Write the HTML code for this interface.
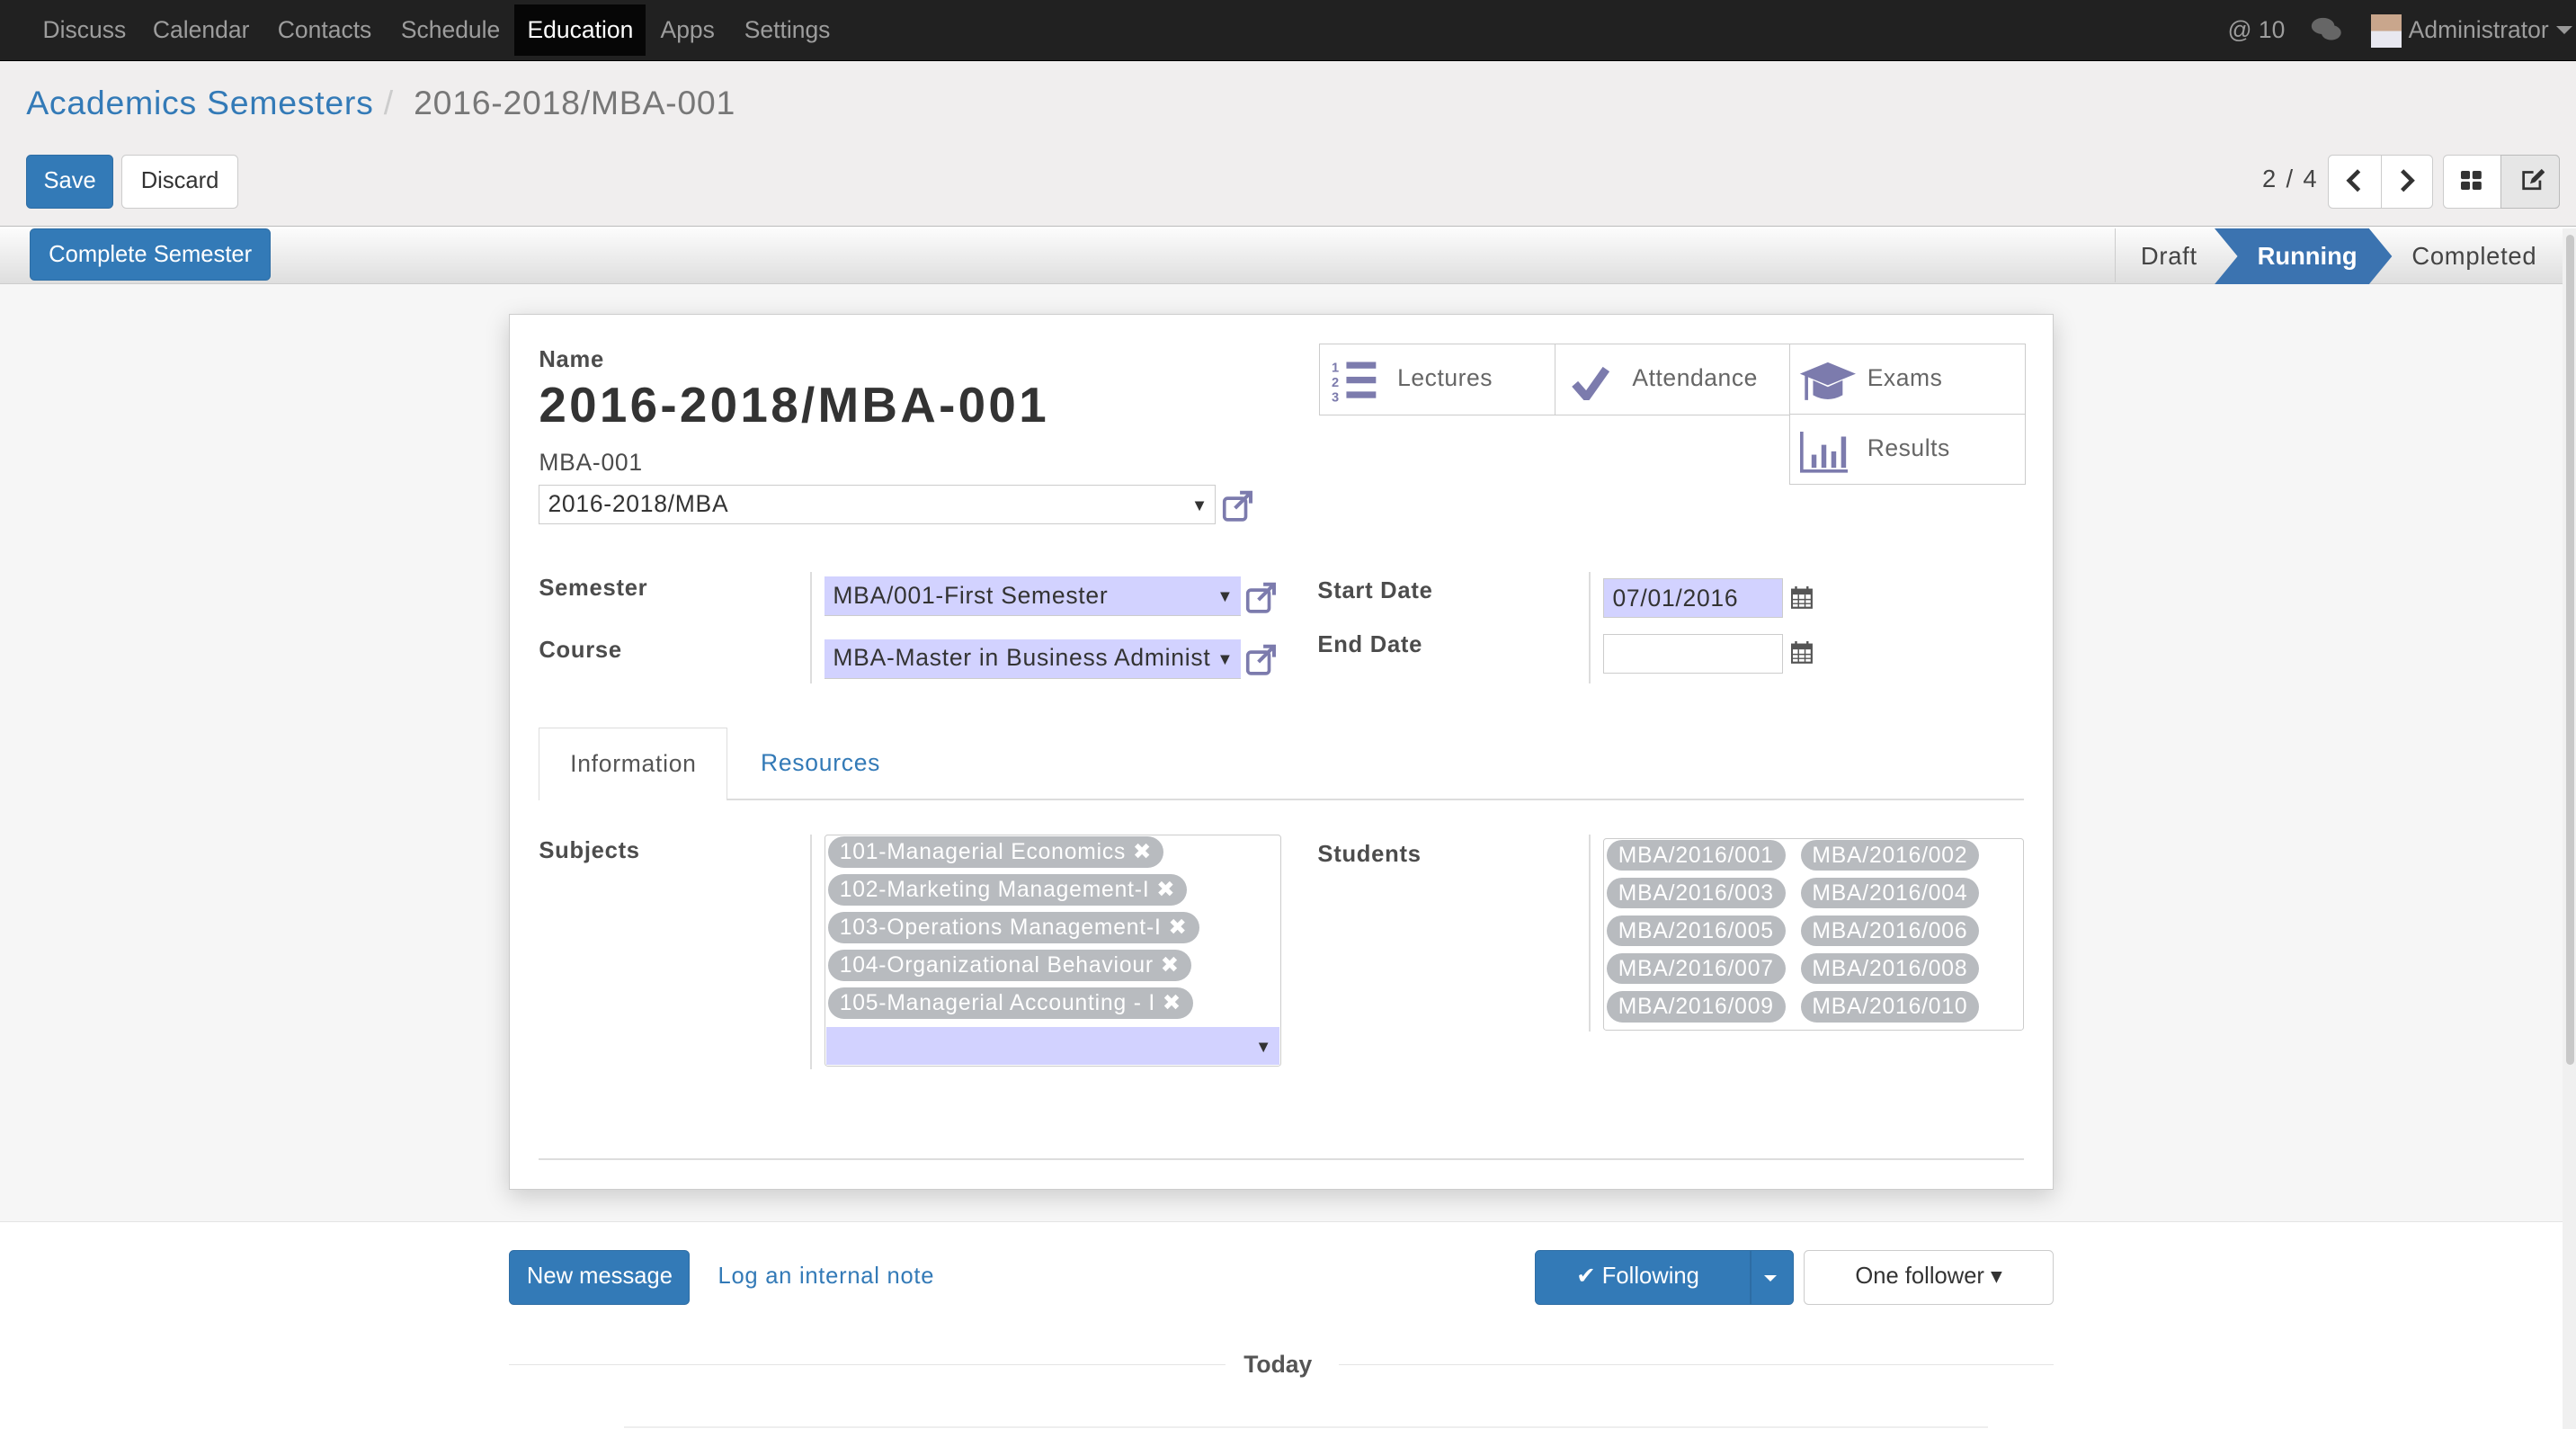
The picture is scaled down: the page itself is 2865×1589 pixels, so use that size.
<!DOCTYPE html>
<html><head><meta charset="utf-8">
<style>
*{box-sizing:border-box;margin:0;padding:0}
html,body{width:2865px;height:1589px;overflow:hidden;background:#fff}
#r{zoom:1.8272;position:relative;width:1568px;height:870px;font-family:"Liberation Sans",sans-serif;font-size:14px;color:#4c4c4c;overflow:hidden}
.a{position:absolute;white-space:nowrap}
.w{letter-spacing:.4px}
.nav{left:0;top:0;width:1568px;height:37px;background:#212121;border-bottom:1px solid #000}
.nav span{position:absolute;top:10px;color:#9d9d9d;font-size:14.5px}
.cp{left:0;top:37px;width:1568px;height:101px;background:#f0eeee;border-bottom:1px solid #bbb}
.btn{position:absolute;border-radius:3px;font-size:14px;text-align:center}
.bp{background:#337ab7;color:#fff;border:1px solid #2e6da4}
.bd{background:#fff;color:#333;border:1px solid #ccc}
.sb{left:0;top:139px;width:1560px;height:34px;background:linear-gradient(#fcfcfc,#dedede);border-bottom:1px solid #ccc}
.bg{left:0;top:173px;width:1560px;height:570px;background:#f6f6f6}
.sheet{left:310px;top:191px;width:940px;height:533px;background:#fff;border:1px solid #ccc;box-shadow:0 4px 14px rgba(0,0,0,.18)}
.lbl{font-weight:bold;color:#4c4c4c;font-size:14px;letter-spacing:.4px}
.req{background:#d2d2ff}
.tag{position:absolute;height:19px;border-radius:10px;background:#b8bbbf;color:#fff;font-size:13.5px;padding:1px 7px;line-height:17px;letter-spacing:.45px}
.bb{position:absolute;border:1px solid #ccc;background:#fff;height:44px}
.bb span{position:absolute;left:47px;top:12px;font-size:14.5px;color:#666;letter-spacing:.3px}
.sep{position:absolute;width:1px;background:#ddd}
</style></head><body><div id="r">
<svg width="0" height="0" style="position:absolute"><defs>
<g id="ext"><rect x="1.5" y="5" width="13" height="13" rx="2" fill="none" stroke="#7c7bad" stroke-width="2"/><path d="M8 11 L17 2 M11 1.5 H17.5 V8" fill="none" stroke="#7c7bad" stroke-width="2.2"/></g>
<g id="cal"><rect x="0.5" y="2" width="12" height="11" fill="none" stroke="#555" stroke-width="1.2"/><rect x="0.5" y="2" width="12" height="3" fill="#555"/><path d="M3 0v3M10 0v3" stroke="#555" stroke-width="1.3"/><path d="M1 8h11M1 10.5h11M4.5 5v8M8.5 5v8" stroke="#555" stroke-width=".8"/></g>
</defs></svg>
<div class="a nav">
<span style="left:26px">Discuss</span><span style="left:93px">Calendar</span><span style="left:169px">Contacts</span><span style="left:244px">Schedule</span>
<div class="a" style="left:313px;top:3px;width:80px;height:31px;background:#060606"></div>
<span style="left:321px;color:#fff">Education</span><span style="left:402px">Apps</span><span style="left:453px">Settings</span>
<span style="left:1356px">@ 10</span>
<svg class="a" style="left:1406px;top:10px" width="20" height="16"><ellipse cx="8" cy="6" rx="7" ry="5" fill="#666"/><ellipse cx="13" cy="10" rx="6" ry="4.5" fill="#666"/></svg>
<div class="a" style="left:1443px;top:9px;width:19px;height:20px;background:linear-gradient(#c9a68c 0 50%,#e8e8f0 50%)"></div>
<span style="left:1466px">Administrator</span>
<span style="left:1556px;top:16px;border:5px solid transparent;border-top-color:#999;width:0;height:0"></span>
</div>
<div class="a cp">
<div class="a w" style="left:16px;top:14px;font-size:20.5px;color:#337ab7">Academics Semesters <span style="color:#ccc">/</span> <span style="color:#777">&nbsp;2016-2018/MBA-001</span></div>
<div class="btn bp" style="left:16px;top:57px;width:53px;height:33px;line-height:31px">Save</div>
<div class="btn bd" style="left:74px;top:57px;width:71px;height:33px;line-height:31px">Discard</div>
<div class="a" style="left:1377px;top:63px;font-size:15px;color:#444;letter-spacing:1px">2 / 4</div>
<div class="btn bd" style="left:1417px;top:57px;width:64px;height:33px"></div>
<div class="a" style="left:1449px;top:57px;width:1px;height:33px;background:#ccc"></div>
<svg class="a" style="left:1428px;top:66px" width="10" height="14"><path d="M8 1 L2 7 L8 13" stroke="#333" stroke-width="2.5" fill="none"/></svg>
<svg class="a" style="left:1460px;top:66px" width="10" height="14"><path d="M2 1 L8 7 L2 13" stroke="#333" stroke-width="2.5" fill="none"/></svg>
<div class="btn bd" style="left:1487px;top:57px;width:71px;height:33px"></div>
<div class="a" style="left:1522px;top:57px;width:36px;height:33px;background:#e6e6e6;border:1px solid #bbb;border-radius:0 3px 3px 0"></div>
<svg class="a" style="left:1498px;top:67px" width="13" height="12"><rect x="0" y="0" width="5.5" height="5" rx="1" fill="#333"/><rect x="7" y="0" width="5.5" height="5" rx="1" fill="#333"/><rect x="0" y="6.5" width="5.5" height="5" rx="1" fill="#333"/><rect x="7" y="6.5" width="5.5" height="5" rx="1" fill="#333"/></svg>
<svg class="a" style="left:1534px;top:65px" width="15" height="15"><path d="M8 3 H2 V13 H12 V8" fill="none" stroke="#333" stroke-width="1.5"/><path d="M6 10 L7 7 L13 1 L15 3 L9 9 Z" fill="#333"/></svg>
</div>
<div class="a sb">
<div class="btn bp w" style="left:18px;top:0;width:147px;height:32px;line-height:31px;letter-spacing:0">Complete Semester</div>
<div class="a" style="left:1287px;top:0;width:273px;height:33px;border-left:1px solid #ccc"></div>
<div class="a w" style="left:1303px;top:8px;font-size:15px;color:#444">Draft</div>
<svg class="a" style="left:1348px;top:0" width="110" height="34"><polygon points="0,0 94,0 108,17 94,34 0,34 14,17" fill="#3b73b0"/></svg>
<div class="a" style="left:1374px;top:8px;font-size:15px;color:#fff;font-weight:bold">Running</div>
<div class="a w" style="left:1468px;top:8px;font-size:15px;color:#444">Completed</div>
</div>
<div class="a" style="left:1560px;top:139px;width:8px;height:731px;background:#f0f0f0"></div>
<div class="a" style="left:1562px;top:143px;width:5px;height:505px;background:#c8c8c8;border-radius:3px"></div>
<div class="a bg"></div>
<div class="a sheet"></div>
<div class="a lbl" style="left:328px;top:211px">Name</div>
<div class="a" style="left:328px;top:229px;font-size:30px;font-weight:bold;color:#333;letter-spacing:1.8px">2016-2018/MBA-001</div>
<div class="a w" style="left:328px;top:273px;font-size:14.5px">MBA-001</div>
<div class="a w" style="left:328px;top:295px;width:412px;height:24px;border:1px solid #ccc;padding:3px 5px;font-size:14.5px;color:#333">2016-2018/MBA<span style="position:absolute;right:4px;font-size:10px;top:6px">&#9660;</span></div>
<svg class="a" style="left:744px;top:298px" width="20" height="20"><use href="#ext"/></svg>
<div class="bb" style="left:803px;top:209px;width:144px"><svg class="a" style="left:7px;top:8px" width="28" height="28"><text x="0" y="9" font-size="8" fill="#7c7bad" font-weight="bold">1</text><text x="0" y="18" font-size="8" fill="#7c7bad" font-weight="bold">2</text><text x="0" y="27" font-size="8" fill="#7c7bad" font-weight="bold">3</text><rect x="9" y="3" width="18" height="4" fill="#7c7bad"/><rect x="9" y="12" width="18" height="4" fill="#7c7bad"/><rect x="9" y="21" width="18" height="4" fill="#7c7bad"/></svg><span>Lectures</span></div>
<div class="bb" style="left:946px;top:209px;width:144px"><svg class="a" style="left:10px;top:12px" width="24" height="22"><path d="M2 12 L9 20 L21 3" stroke="#7c7bad" stroke-width="5" fill="none" stroke-linejoin="round"/></svg><span>Attendance</span></div>
<div class="bb" style="left:1089px;top:209px;width:144px"><svg class="a" style="left:5px;top:10px" width="36" height="30"><polygon points="1,8 18,1 35,8 18,15" fill="#7c7bad"/><path d="M9 12 L9 21 Q18 26 27 21 L27 12 L18 16 Z" fill="#7c7bad"/><rect x="4" y="9" width="2" height="15" fill="#7c7bad"/></svg><span>Exams</span></div>
<div class="bb" style="left:1089px;top:252px;width:144px;height:43px"><svg class="a" style="left:6px;top:10px" width="30" height="26"><path d="M1 0 V24 H29" stroke="#7c7bad" stroke-width="2" fill="none"/><rect x="7" y="14" width="3" height="8" fill="#7c7bad"/><rect x="13" y="8" width="3" height="14" fill="#7c7bad"/><rect x="19" y="12" width="3" height="10" fill="#7c7bad"/><rect x="25" y="3" width="3" height="19" fill="#7c7bad"/></svg><span>Results</span></div>
<div class="a lbl" style="left:328px;top:350px">Semester</div>
<div class="a lbl" style="left:328px;top:388px">Course</div>
<div class="sep" style="left:493px;top:348px;height:68px"></div>
<div class="a req w" style="left:502px;top:351px;width:253px;height:24px;border-bottom:1px solid #ccc;padding:3px 5px;font-size:14.5px;color:#333">MBA/001-First Semester<span style="position:absolute;right:4px;font-size:10px;top:6px">&#9660;</span></div>
<div class="a req w" style="left:502px;top:389px;width:253px;height:24px;border-bottom:1px solid #ccc;padding:3px 5px;font-size:14.5px;color:#333;overflow:hidden">MBA-Master in Business Administ<span style="position:absolute;right:0;top:0;padding:6px 4px 0 1px;font-size:10px;background:#d2d2ff;height:23px">&#9660;</span></div>
<svg class="a" style="left:758px;top:354px" width="20" height="20"><use href="#ext"/></svg>
<svg class="a" style="left:758px;top:392px" width="20" height="20"><use href="#ext"/></svg>
<div class="a lbl" style="left:802px;top:352px">Start Date</div>
<div class="a lbl" style="left:802px;top:385px">End Date</div>
<div class="sep" style="left:967px;top:348px;height:68px"></div>
<div class="a req w" style="left:976px;top:352px;width:109px;height:24px;border:1px solid #ccc;padding:3px 5px;font-size:14.5px;color:#333">07/01/2016</div>
<div class="a" style="left:976px;top:386px;width:109px;height:24px;border:1px solid #ccc"></div>
<svg class="a" style="left:1090px;top:357px" width="14" height="14"><use href="#cal"/></svg>
<svg class="a" style="left:1090px;top:390px" width="14" height="14"><use href="#cal"/></svg>
<div class="a" style="left:328px;top:486px;width:904px;height:1px;background:#ddd"></div>
<div class="a w" style="left:328px;top:443px;width:115px;height:44px;background:#fff;border:1px solid #ddd;border-bottom:none;padding-top:13px;text-align:center;font-size:14.5px;color:#555">Information</div>
<div class="a w" style="left:463px;top:456px;font-size:14.5px;color:#337ab7">Resources</div>
<div class="a lbl" style="left:328px;top:510px">Subjects</div>
<div class="sep" style="left:493px;top:508px;height:143px"></div>
<div class="a" style="left:502px;top:508px;width:278px;height:141px;border:1px solid #ccc;border-radius:2px"></div>
<div class="tag" style="left:504px;top:509px">101-Managerial Economics &#10006;</div>
<div class="tag" style="left:504px;top:532px">102-Marketing Management-I &#10006;</div>
<div class="tag" style="left:504px;top:555px">103-Operations Management-I &#10006;</div>
<div class="tag" style="left:504px;top:578px">104-Organizational Behaviour &#10006;</div>
<div class="tag" style="left:504px;top:601px">105-Managerial Accounting - I &#10006;</div>
<div class="a req" style="left:503px;top:625px;width:276px;height:23px"><span style="position:absolute;right:5px;top:6px;font-size:10px;color:#333">&#9660;</span></div>
<div class="a lbl" style="left:802px;top:512px">Students</div>
<div class="sep" style="left:967px;top:508px;height:120px"></div>
<div class="a" style="left:976px;top:510px;width:256px;height:117px;border:1px solid #ccc;border-radius:2px"></div>
<div class="tag" style="left:978px;top:511px">MBA/2016/001</div><div class="tag" style="left:1096px;top:511px">MBA/2016/002</div>
<div class="tag" style="left:978px;top:534px">MBA/2016/003</div><div class="tag" style="left:1096px;top:534px">MBA/2016/004</div>
<div class="tag" style="left:978px;top:557px">MBA/2016/005</div><div class="tag" style="left:1096px;top:557px">MBA/2016/006</div>
<div class="tag" style="left:978px;top:580px">MBA/2016/007</div><div class="tag" style="left:1096px;top:580px">MBA/2016/008</div>
<div class="tag" style="left:978px;top:603px">MBA/2016/009</div><div class="tag" style="left:1096px;top:603px">MBA/2016/010</div>
<div class="a" style="left:328px;top:705px;width:904px;height:1px;background:#ddd"></div>
<div class="a" style="left:0;top:743px;width:1560px;height:1px;background:#e4e4e4"></div>
<div class="btn bp" style="left:310px;top:761px;width:110px;height:33px;line-height:31px">New message</div>
<div class="a w" style="left:437px;top:769px;color:#337ab7">Log an internal note</div>
<div class="btn bp" style="left:934px;top:761px;width:158px;height:33px;line-height:31px;text-align:left;padding-left:25px">&#10004; Following</div>
<div class="a" style="left:1065px;top:761px;width:1px;height:33px;background:#2e6da4"></div>
<div class="a" style="left:1074px;top:776px;border:4px solid transparent;border-top-color:#fff"></div>
<div class="btn bd" style="left:1098px;top:761px;width:152px;height:33px;line-height:31px">One follower &#9662;</div>
<div class="a" style="left:310px;top:830px;width:436px;height:1px;background:#e4e4e4"></div>
<div class="a" style="left:815px;top:830px;width:435px;height:1px;background:#e4e4e4"></div>
<div class="a" style="left:757px;top:822px;font-weight:bold;font-size:14.5px;color:#555">Today</div>
<div class="a" style="left:380px;top:868px;width:830px;height:1px;background:#eee"></div>
</div></body></html>
